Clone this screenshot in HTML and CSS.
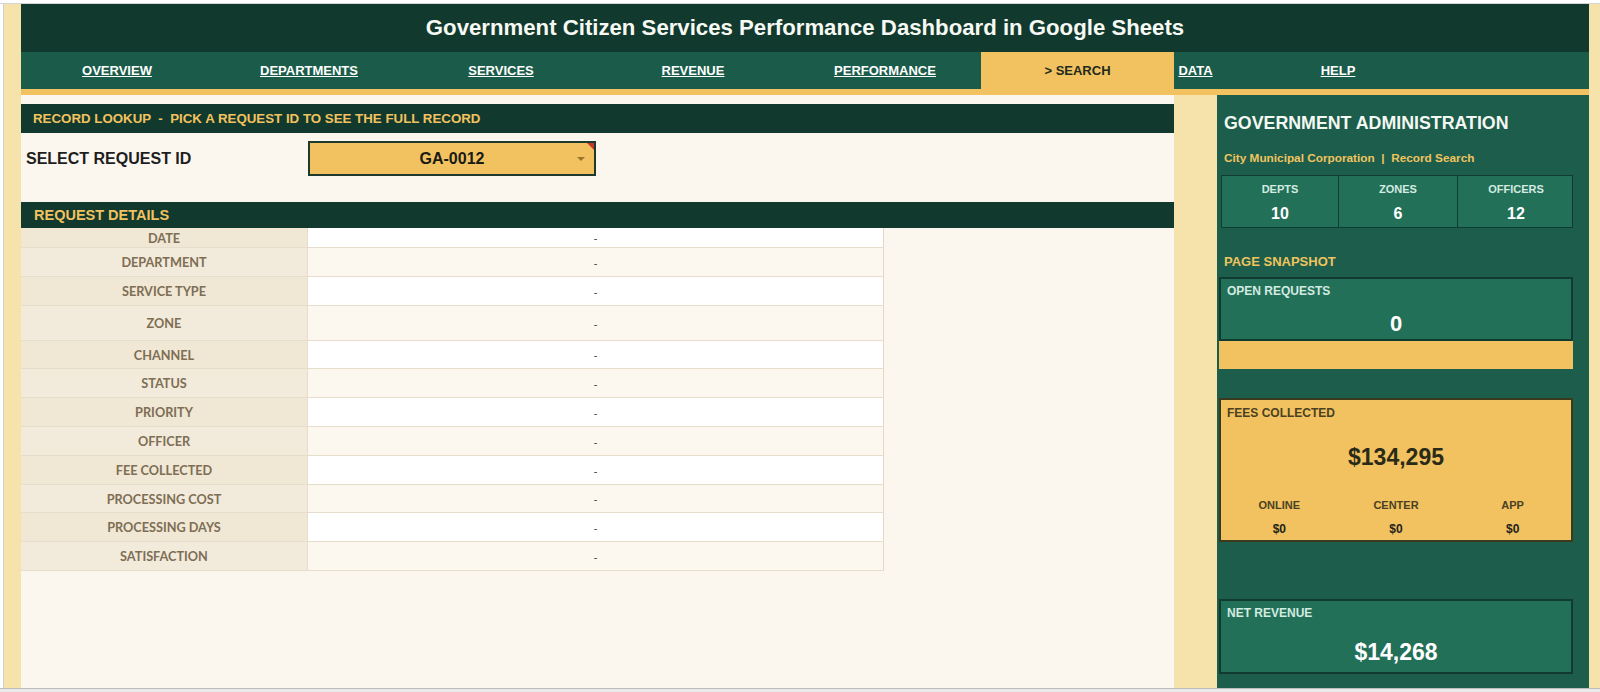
FILE: index.html
```html
<!DOCTYPE html>
<html>
<head>
<meta charset="utf-8">
<title>Government Citizen Services Performance Dashboard</title>
<link rel="stylesheet" href="styles.css">
</head>
<body>
<div class="topgrid"></div>
<div class="frame">
  <div class="gutter"></div>
  <div class="sheet">
    <header class="title">Government Citizen Services Performance Dashboard in Google Sheets</header>
    <nav class="nav">
      <a class="tab">OVERVIEW</a>
      <a class="tab">DEPARTMENTS</a>
      <a class="tab">SERVICES</a>
      <a class="tab">REVENUE</a>
      <a class="tab">PERFORMANCE</a>
      <span class="tab active">&gt; SEARCH</span>
      <a class="tab">DATA</a>
      <a class="tab">HELP</a>
      <span class="tab"></span>
    </nav>
    <div class="rule"></div>
    <div class="body">
      <main class="content">
        <div class="band band-lookup">RECORD LOOKUP  -  PICK A REQUEST ID TO SEE THE FULL RECORD</div>
        <div class="select-row">
          <div class="select-label">SELECT REQUEST ID</div>
          <div class="dropdown">
            <span class="dd-value">GA-0012</span>
            <span class="dd-arrow"></span>
            <span class="dd-note"></span>
          </div>
        </div>
        <div class="band band-details">REQUEST DETAILS</div>
        <div class="details">
          <div class="row r-date"><div class="lbl">DATE</div><div class="val">-</div></div>
          <div class="row alt"><div class="lbl">DEPARTMENT</div><div class="val">-</div></div>
          <div class="row"><div class="lbl">SERVICE TYPE</div><div class="val">-</div></div>
          <div class="row alt r-zone"><div class="lbl">ZONE</div><div class="val">-</div></div>
          <div class="row r-short"><div class="lbl">CHANNEL</div><div class="val">-</div></div>
          <div class="row alt"><div class="lbl">STATUS</div><div class="val">-</div></div>
          <div class="row"><div class="lbl">PRIORITY</div><div class="val">-</div></div>
          <div class="row alt"><div class="lbl">OFFICER</div><div class="val">-</div></div>
          <div class="row"><div class="lbl">FEE COLLECTED</div><div class="val">-</div></div>
          <div class="row alt r-short"><div class="lbl">PROCESSING COST</div><div class="val">-</div></div>
          <div class="row"><div class="lbl">PROCESSING DAYS</div><div class="val">-</div></div>
          <div class="row alt"><div class="lbl">SATISFACTION</div><div class="val">-</div></div>
        </div>
      </main>
      <div class="spacer"></div>
      <aside class="panel">
        <div class="rp-title">GOVERNMENT ADMINISTRATION</div>
        <div class="rp-sub">City Municipal Corporation  |  Record Search</div>
        <div class="stats">
          <div class="stat"><div class="stat-lbl">DEPTS</div><div class="stat-val">10</div></div>
          <div class="stat"><div class="stat-lbl">ZONES</div><div class="stat-val">6</div></div>
          <div class="stat"><div class="stat-lbl">OFFICERS</div><div class="stat-val">12</div></div>
        </div>
        <div class="rp-section">PAGE SNAPSHOT</div>
        <div class="card card-open">
          <div class="card-lbl">OPEN REQUESTS</div>
          <div class="card-val">0</div>
        </div>
        <div class="open-bar"></div>
        <div class="card card-fees">
          <div class="card-lbl">FEES COLLECTED</div>
          <div class="card-val">$134,295</div>
          <div class="channels">
            <div class="ch"><div class="ch-lbl">ONLINE</div><div class="ch-val">$0</div></div>
            <div class="ch"><div class="ch-lbl">CENTER</div><div class="ch-val">$0</div></div>
            <div class="ch"><div class="ch-lbl">APP</div><div class="ch-val">$0</div></div>
          </div>
        </div>
        <div class="card card-net">
          <div class="card-lbl">NET REVENUE</div>
          <div class="card-val">$14,268</div>
        </div>
      </aside>
    </div>
  </div>
</div>
<div class="bottombar"></div>
</body>
</html>
```
FILE: styles.css
```css
* { box-sizing: border-box; }
html, body { margin: 0; padding: 0; }
body {
  width: 1600px;
  height: 692px;
  overflow: hidden;
  background: #ffffff;
  font-family: "Liberation Sans", Arial, sans-serif;
}
.topgrid {
  height: 4px;
  background: #ffffff;
  border-bottom: 1px solid #d4d4d4;
}
.frame {
  display: flex;
  height: 684px;
}
.gutter {
  width: 4px;
  background: #ffffff;
  border-right: 1px solid #d0d0d0;
}
.sheet {
  width: 1596px;
  background: #f6e2ab;
  padding: 0 11px 0 17px;
  display: flex;
  flex-direction: column;
}
.title {
  height: 48px;
  background: #12392d;
  color: #f7f9f4;
  font-weight: bold;
  font-size: 22.2px;
  line-height: 48px;
  text-align: center;
}
.nav {
  height: 37px;
  background: #1b5b49;
  display: grid;
  grid-template-columns: 192px 192px 192px 192px 192px 193px 43px 242px 130px;
}
.tab {
  color: #ffffff;
  font-weight: bold;
  font-size: 13px;
  line-height: 37px;
  text-align: center;
  text-decoration: underline;
  white-space: nowrap;
}
.tab.active {
  background: #f1c25f;
  color: #1f2a1c;
  text-decoration: none;
}
.rule {
  height: 6px;
  background: #f1c25f;
}
.body {
  flex: 1;
  display: grid;
  grid-template-columns: 1153px 43px 372px;
}
.content {
  background: #fbf7ef;
  padding-top: 9px;
}
.band {
  background: #12392d;
  color: #f1c25f;
  font-weight: bold;
  white-space: pre;
}
.band-lookup {
  height: 29px;
  line-height: 29px;
  font-size: 13.3px;
  padding-left: 12px;
}
.select-row {
  height: 69px;
  display: grid;
  grid-template-columns: 287px 288px;
  align-items: start;
}
.select-label {
  padding-left: 5px;
  margin-top: 16px;
  line-height: 20px;
  font-size: 16px;
  font-weight: bold;
  color: #1e1e1e;
}
.dropdown {
  position: relative;
  margin-top: 8px;
  height: 35px;
  background: #f1c25f;
  border: 2px solid #1d3a2c;
  display: flex;
  align-items: center;
  justify-content: center;
}
.dd-value {
  font-weight: bold;
  font-size: 16px;
  color: #1a1a14;
}
.dd-arrow {
  position: absolute;
  right: 9px;
  top: 14px;
  width: 0;
  height: 0;
  border-left: 4px solid transparent;
  border-right: 4px solid transparent;
  border-top: 4px solid #9a7428;
}
.dd-note {
  position: absolute;
  right: 0;
  top: 0;
  width: 0;
  height: 0;
  border-left: 7px solid transparent;
  border-top: 7px solid #c0392b;
}
.band-details {
  height: 26px;
  line-height: 26px;
  font-size: 14.5px;
  padding-left: 13px;
}
.details {
  width: 863px;
}
.row {
  display: grid;
  grid-template-columns: 287px 576px;
  height: 29px;
  border-bottom: 1px solid #e6ddca;
}
.row.r-date { height: 20px; }
.row.r-zone { height: 35px; }
.row.r-short { height: 28px; }
.lbl {
  background: #f0e7d5;
  border-right: 1px solid #e6ddca;
  font-family: Lato, "Liberation Sans", sans-serif;
  font-weight: bold;
  font-size: 12.7px;
  color: #7d6e54;
  display: flex;
  align-items: center;
  justify-content: center;
}
.row.alt .lbl { background: #f2eadb; }
.val {
  background: #ffffff;
  border-right: 1px solid #e2d8c4;
  font-family: Lato, "Liberation Sans", sans-serif;
  font-size: 11px;
  color: #444444;
  display: flex;
  align-items: center;
  justify-content: center;
  padding-top: 2px;
}
.row.alt .val { background: #fcf8f0; }
.spacer { background: #f6e2ab; }
.panel {
  background: #1c5d4b;
  display: flex;
  flex-direction: column;
  padding: 0 16px 0 2px;
}
.rp-title {
  margin-top: 18px;
  padding-left: 5px;
  line-height: 20px;
  font-size: 17.8px;
  font-weight: bold;
  color: #f4f8f3;
  white-space: nowrap;
}
.rp-sub {
  margin-top: 16px;
  padding-left: 5px;
  line-height: 18px;
  font-size: 11.8px;
  font-weight: bold;
  color: #efc45f;
  white-space: pre;
}
.stats {
  margin: 8px 0 0 2px;
  height: 53px;
  display: grid;
  grid-template-columns: 116px 119px 117px;
  border: 1px solid #103d30;
  background: #237059;
}
.stat + .stat { border-left: 1px solid #103d30; }
.stat-lbl {
  margin-top: 6px;
  line-height: 14px;
  font-size: 11px;
  font-weight: bold;
  color: #d3ebe0;
  text-align: center;
}
.stat-val {
  margin-top: 8px;
  line-height: 20px;
  font-size: 16px;
  font-weight: bold;
  color: #ffffff;
  text-align: center;
}
.rp-section {
  margin-top: 25px;
  padding-left: 5px;
  line-height: 18px;
  font-size: 13px;
  font-weight: bold;
  color: #efc45f;
}
.card {
  border: 2px solid #113b2f;
  background: #237059;
}
.card-lbl {
  padding-left: 6px;
  line-height: 14px;
  font-size: 12px;
  font-weight: bold;
  color: #d3ebe0;
}
.card-val {
  text-align: center;
  font-weight: bold;
  color: #ffffff;
}
.card-open {
  margin-top: 6px;
  height: 64px;
}
.card-open .card-lbl { margin-top: 5px; }
.card-open .card-val {
  margin-top: 13px;
  line-height: 26px;
  font-size: 22px;
}
.open-bar {
  height: 28px;
  background: #f1c25f;
}
.card-fees {
  margin-top: 29px;
  height: 144px;
  background: #f1c25f;
  border-color: #3b3a1c;
}
.card-fees .card-lbl {
  margin-top: 6px;
  color: #4b4122;
}
.card-fees .card-val {
  margin-top: 23px;
  line-height: 28px;
  font-size: 23px;
  color: #2a2a18;
}
.channels {
  margin-top: 27px;
  display: grid;
  grid-template-columns: 1fr 1fr 1fr;
}
.ch { text-align: center; }
.ch-lbl {
  line-height: 14px;
  font-size: 11px;
  font-weight: bold;
  color: #4b4122;
}
.ch-val {
  margin-top: 10px;
  line-height: 14px;
  font-size: 12px;
  font-weight: bold;
  color: #22221a;
}
.card-net {
  margin-top: 57px;
  height: 75px;
}
.card-net .card-lbl { margin-top: 5px; }
.card-net .card-val {
  margin-top: 18px;
  line-height: 28px;
  font-size: 23px;
}
.bottombar {
  height: 4px;
  background: #e9e9e9;
  border-top: 1px solid #bdbdbd;
}
```
